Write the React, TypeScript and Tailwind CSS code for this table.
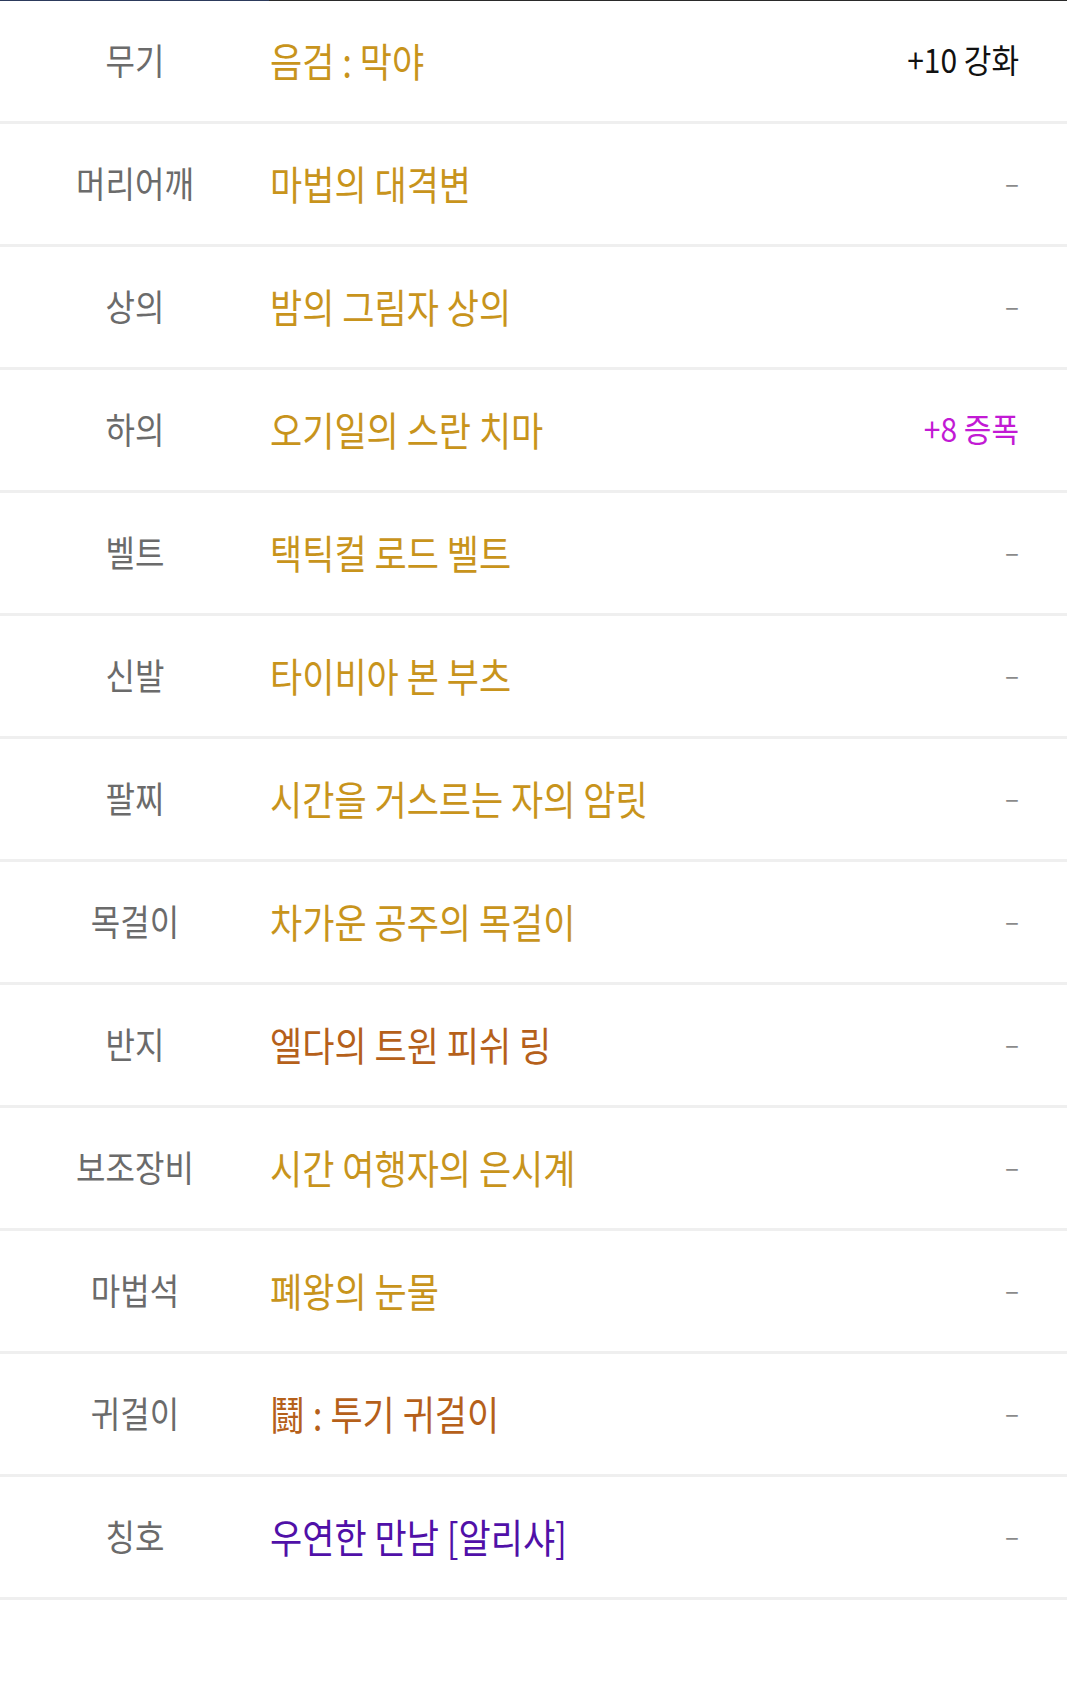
import React from "react";

type Row = {
  label: string;
  name: string;
  nameColor: string;
  extra: string;
  extraColor: string;
};

const GOLD = "text-[#c8941c]";
const BROWN = "text-[#b5601a]";
const PURPLE = "text-[#5010a8]";
const DASH = "text-[#8a8a8a]";

const rows: Row[] = [
  { label: "무기", name: "음검 : 막야", nameColor: GOLD, extra: "+10 강화", extraColor: "text-[#111111]" },
  { label: "머리어깨", name: "마법의 대격변", nameColor: GOLD, extra: "–", extraColor: DASH },
  { label: "상의", name: "밤의 그림자 상의", nameColor: GOLD, extra: "–", extraColor: DASH },
  { label: "하의", name: "오기일의 스란 치마", nameColor: GOLD, extra: "+8 증폭", extraColor: "text-[#c21ad4]" },
  { label: "벨트", name: "택틱컬 로드 벨트", nameColor: GOLD, extra: "–", extraColor: DASH },
  { label: "신발", name: "타이비아 본 부츠", nameColor: GOLD, extra: "–", extraColor: DASH },
  { label: "팔찌", name: "시간을 거스르는 자의 암릿", nameColor: GOLD, extra: "–", extraColor: DASH },
  { label: "목걸이", name: "차가운 공주의 목걸이", nameColor: GOLD, extra: "–", extraColor: DASH },
  { label: "반지", name: "엘다의 트윈 피쉬 링", nameColor: BROWN, extra: "–", extraColor: DASH },
  { label: "보조장비", name: "시간 여행자의 은시계", nameColor: GOLD, extra: "–", extraColor: DASH },
  { label: "마법석", name: "폐왕의 눈물", nameColor: GOLD, extra: "–", extraColor: DASH },
  { label: "귀걸이", name: "鬪 : 투기 귀걸이", nameColor: BROWN, extra: "–", extraColor: DASH },
  { label: "칭호", name: "우연한 만남 [알리샤]", nameColor: PURPLE, extra: "–", extraColor: DASH },
];

export default function App() {
  return (
    <div
      className="w-[1067px] min-h-[1681px] bg-white"
      style={{ fontFamily: '"Noto Sans CJK KR", "Noto Sans", sans-serif' }}
    >
      <div className="flex h-px">
        <div className="w-[269px] bg-[#2c3a5c]" />
        <div className="flex-1 bg-[#2a2a2a]" />
      </div>
      {rows.map((r) => (
        <div
          key={r.label}
          className="flex h-[123px] items-center border-b-[3px] border-[#efefef]"
        >
          <div className="w-[270px] text-center text-[32px] leading-none text-[#6b6b6b]">
            <span className="inline-block -translate-y-[2px] scale-y-[1.12]">{r.label}</span>
          </div>
          <div className={`flex-1 text-[35px] leading-none ${r.nameColor}`}>
            <span className="inline-block -translate-y-[2px] scale-y-[1.15]">{r.name}</span>
          </div>
          <div
            className={`pr-[48px] leading-none ${r.extraColor} ${
              r.extra === "–" ? "text-[26px]" : "text-[30px]"
            }`}
          >
            <span className="inline-block -translate-y-[2px] scale-y-[1.1]">{r.extra}</span>
          </div>
        </div>
      ))}
    </div>
  );
}
